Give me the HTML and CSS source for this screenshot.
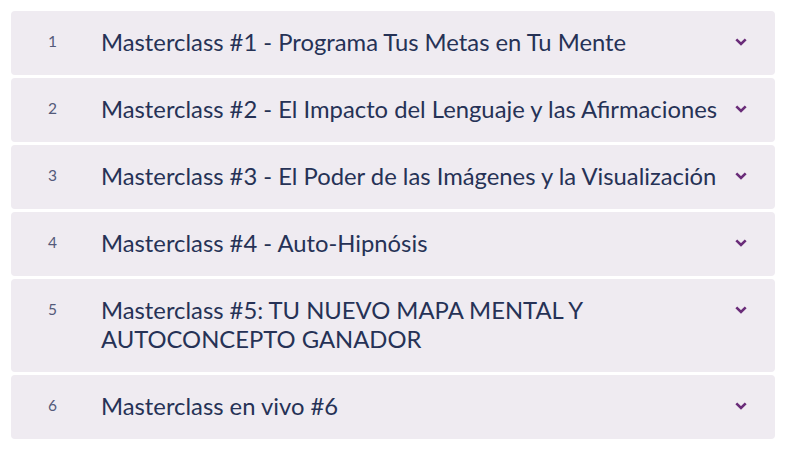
FILE: index.html
```html
<!DOCTYPE html>
<html lang="es">
<head>
<meta charset="utf-8">
<link rel="stylesheet" href="styles.css">
</head>
<body>
<div class="list">
  <div class="item"><span class="num">1</span><span class="title">Masterclass #1 - Programa Tus Metas en Tu Mente</span><svg class="chev" viewBox="0 0 12 8"><path d="M1.3 1.3 L6 6 L10.7 1.3"/></svg></div>
  <div class="item"><span class="num">2</span><span class="title">Masterclass #2 - El Impacto del Lenguaje y las Afirmaciones</span><svg class="chev" viewBox="0 0 12 8"><path d="M1.3 1.3 L6 6 L10.7 1.3"/></svg></div>
  <div class="item"><span class="num">3</span><span class="title">Masterclass #3 - El Poder de las Imágenes y la Visualización</span><svg class="chev" viewBox="0 0 12 8"><path d="M1.3 1.3 L6 6 L10.7 1.3"/></svg></div>
  <div class="item"><span class="num">4</span><span class="title">Masterclass #4 - Auto-Hipnósis</span><svg class="chev" viewBox="0 0 12 8"><path d="M1.3 1.3 L6 6 L10.7 1.3"/></svg></div>
  <div class="item"><span class="num">5</span><span class="title">Masterclass #5: TU NUEVO MAPA MENTAL Y AUTOCONCEPTO GANADOR</span><svg class="chev" viewBox="0 0 12 8"><path d="M1.3 1.3 L6 6 L10.7 1.3"/></svg></div>
  <div class="item"><span class="num">6</span><span class="title">Masterclass en vivo #6</span><svg class="chev" viewBox="0 0 12 8"><path d="M1.3 1.3 L6 6 L10.7 1.3"/></svg></div>
</div>
</body>
</html>
```
FILE: styles.css
```css
html, body { margin: 0; padding: 0; background: #ffffff; }
body { font-family: Lato, "Open Sans", sans-serif; }
.list {
  display: flex;
  flex-direction: column;
  gap: 3px;
  padding: 11px 13px 0 11px;
}
.item {
  display: flex;
  align-items: flex-start;
  background: #efebf1;
  border-radius: 4px;
  padding: 17px 28px 18px 0;
}
.num {
  width: 90px;
  flex: none;
  padding-left: 37px;
  box-sizing: border-box;
  font-size: 15.5px;
  line-height: 20px;
  color: #545a7a;
  margin-top: 3px;
}
.title {
  flex: 1;
  font-size: 23.8px;
  line-height: 29px;
  color: #263256;
  padding-right: 8px;
}
.chev {
  flex: none;
  width: 12px;
  height: 8px;
  margin-top: 10px;
  fill: none;
  stroke: #6a2c79;
  stroke-width: 2.6;
  stroke-linejoin: miter;
  stroke-linecap: butt;
}
```
